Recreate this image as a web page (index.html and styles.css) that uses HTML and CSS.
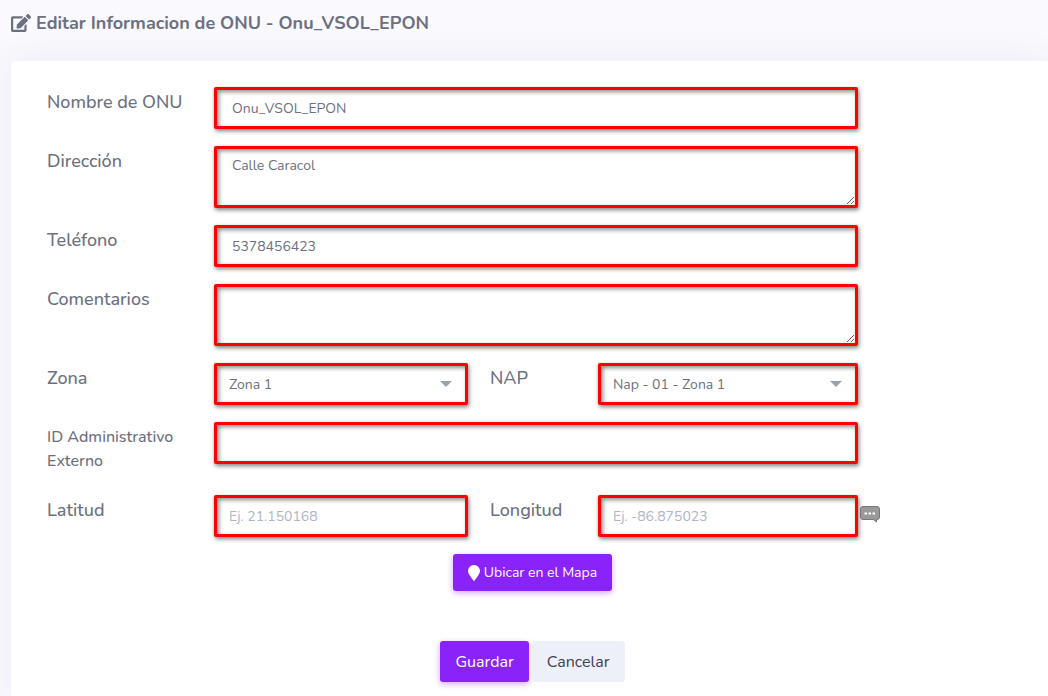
FILE: index.html
```html
<!DOCTYPE html>
<html lang="es">
<head>
<meta charset="utf-8">
<title>Editar Informacion de ONU</title>
<link rel="stylesheet" href="styles.css">
</head>
<body>
<header class="page-head">
  <svg class="edit-icon" viewBox="0 0 576 512" aria-hidden="true"><path fill="currentColor" d="M402.600 83.200l90.200 90.200c3.800 3.800 3.800 10 0 13.800L274.400 405.600l-92.800 10.300c-12.400 1.400-22.900-9.100-21.500-21.500l10.300-92.800L388.800 83.200c3.800-3.800 10-3.800 13.800 0zm162-22.900l-48.800-48.800c-15.200-15.200-39.900-15.200-55.200 0l-35.400 35.400c-3.800 3.800-3.800 10 0 13.800l90.200 90.200c3.800 3.800 10 3.800 13.800 0l35.400-35.400c15.200-15.300 15.200-40 0-55.200zM384 346.200V448H64V128h229.800c3.200 0 6.200-1.300 8.500-3.500l40-40c7.600-7.600 2.200-20.500-8.500-20.500H48C21.500 64 0 85.500 0 112v352c0 26.500 21.500 48 48 48h352c26.500 0 48-21.500 48-48V306.200c0-10.700-12.900-16-20.500-8.500l-40 40c-2.200 2.300-3.500 5.300-3.500 8.500z"/></svg>
  <h1 class="page-title">Editar Informacion de ONU - Onu_VSOL_EPON</h1>
</header>
<main class="card">
  <form class="onu-form">
    <div class="row">
      <label class="label" for="nombre">Nombre de ONU</label>
      <input class="field wide" id="nombre" type="text" value="Onu_VSOL_EPON">
    </div>
    <div class="row">
      <label class="label" for="direccion">Dirección</label>
      <textarea class="field wide area" id="direccion">Calle Caracol</textarea>
    </div>
    <div class="row">
      <label class="label" for="telefono">Teléfono</label>
      <input class="field wide" id="telefono" type="text" value="5378456423">
    </div>
    <div class="row">
      <label class="label" for="comentarios">Comentarios</label>
      <textarea class="field wide area" id="comentarios"></textarea>
    </div>
    <div class="row">
      <label class="label" for="zona">Zona</label>
      <select class="field half select" id="zona"><option>Zona 1</option></select>
      <label class="label second" for="nap">NAP</label>
      <select class="field half select" id="nap"><option>Nap - 01 - Zona 1</option></select>
    </div>
    <div class="row row-id">
      <label class="label small" for="idext">ID Administrativo Externo</label>
      <input class="field wide" id="idext" type="text">
    </div>
    <div class="row">
      <label class="label" for="latitud">Latitud</label>
      <input class="field half" id="latitud" type="text" placeholder="Ej. 21.150168">
      <label class="label second" for="longitud">Longitud</label>
      <input class="field half" id="longitud" type="text" placeholder="Ej. -86.875023">
      <svg class="hint" viewBox="0 0 22 18" aria-hidden="true"><path d="M4 1.500h14q2.500 0 2.500 2.500v8q0 2.500-2.500 2.500h-.500v2.500l-3-2.500H4Q1.500 14.500 1.500 12V4Q1.500 1.500 4 1.500z" fill="#999" stroke="#777"/><path d="M5.500 8.500h2.500m1.500 0H12m1.500 0H16" stroke="#fff" stroke-width="2"/></svg>
    </div>
    <div class="map-actions">
      <button class="btn primary map" type="button"><svg class="pin" viewBox="0 0 12 16" aria-hidden="true"><path fill="currentColor" d="M6 0a6 6 0 0 1 6 6c0 3-3.500 6.500-5.300 9.500q-.7.800-1.400 0C3.500 12.500 0 9 0 6a6 6 0 0 1 6-6z"/></svg>Ubicar en el Mapa</button>
    </div>
    <div class="form-actions">
      <button class="btn primary" type="submit">Guardar</button>
      <button class="btn secondary" type="button">Cancelar</button>
    </div>
  </form>
</main>
</body>
</html>
```
FILE: styles.css
```css
* { box-sizing: border-box; }
html { min-height: 100%; background: #f9f9fe; }
body {
  margin: 0;
  color: #6c7080;
  font-family: Nunito, Lato, "Open Sans", sans-serif;
  font-size: 14px;
  overflow-x: hidden;
}
.page-head {
  display: flex;
  align-items: center;
  gap: 5px;
  height: 61px;
  padding: 0 11px 16px;
}
.edit-icon { width: 20px; height: 18px; }
.page-title { margin: 0; font-size: 18px; font-weight: 700; line-height: 24px; }
.card {
  margin-left: 11px;
  min-height: calc(100vh - 61px);
  padding: 26px 30px 14px 36px;
  background: #fff;
  border-radius: 4px 0 0 0;
  box-shadow: 0 0 36px rgba(82, 63, 105, 0.08);
}
.row {
  display: grid;
  grid-template-columns: 167fr 254fr 22fr 108fr 260fr 160fr;
  align-items: start;
  margin-bottom: 17px;
}
.row-id { min-height: 56px; }
.label { padding-top: 3px; font-size: 18px; font-weight: 500; line-height: 24px; }
.label.small { max-width: 140px; font-size: 16px; }
.second { grid-column: 4; }
.field {
  width: 100%;
  min-width: 0;
  height: 42px;
  margin: 0;
  padding: 0 15px;
  color: #6c7080;
  background-color: #fff;
  border: 3px solid #f00;
  border-radius: 2px;
  box-shadow: 1px 2px 4px rgba(0, 0, 0, 0.5), inset 2px 2px 4px rgba(0, 0, 0, 0.45);
  font: inherit;
  outline: none;
}
.field::placeholder { color: #b0b4c4; opacity: 1; }
.wide { grid-column: 2 / 6; }
.area { display: block; height: 62px; padding-top: 7px; resize: vertical; }
.half { padding: 0 12px; }
.select {
  appearance: none;
  background-image: url("data:image/svg+xml,%3Csvg xmlns='http://www.w3.org/2000/svg' viewBox='0 0 12 6'%3E%3Cpath d='M0 0h12L6 6z' fill='%2398a3b0'/%3E%3C/svg%3E");
  background-repeat: no-repeat;
  background-position: right 13px center;
  background-size: 12px 6px;
}
.hint { width: 22px; height: 18px; margin: 10px 0 0 1px; }
.map-actions, .form-actions { display: flex; justify-content: center; }
.form-actions { gap: 3px; margin-top: 50px; }
.btn {
  display: flex;
  align-items: center;
  height: 41px;
  padding: 0 15px;
  border: 0;
  border-radius: 3px;
  font-family: inherit;
  font-size: 16px;
}
.primary { color: #fff; background: #8a22fa; box-shadow: 0 2px 6px rgba(138, 34, 250, 0.4); }
.secondary { color: #3d4053; background: #edf0f9; }
.map { gap: 4px; height: 37px; font-size: 14px; }
.pin { width: 12px; height: 16px; }
```
